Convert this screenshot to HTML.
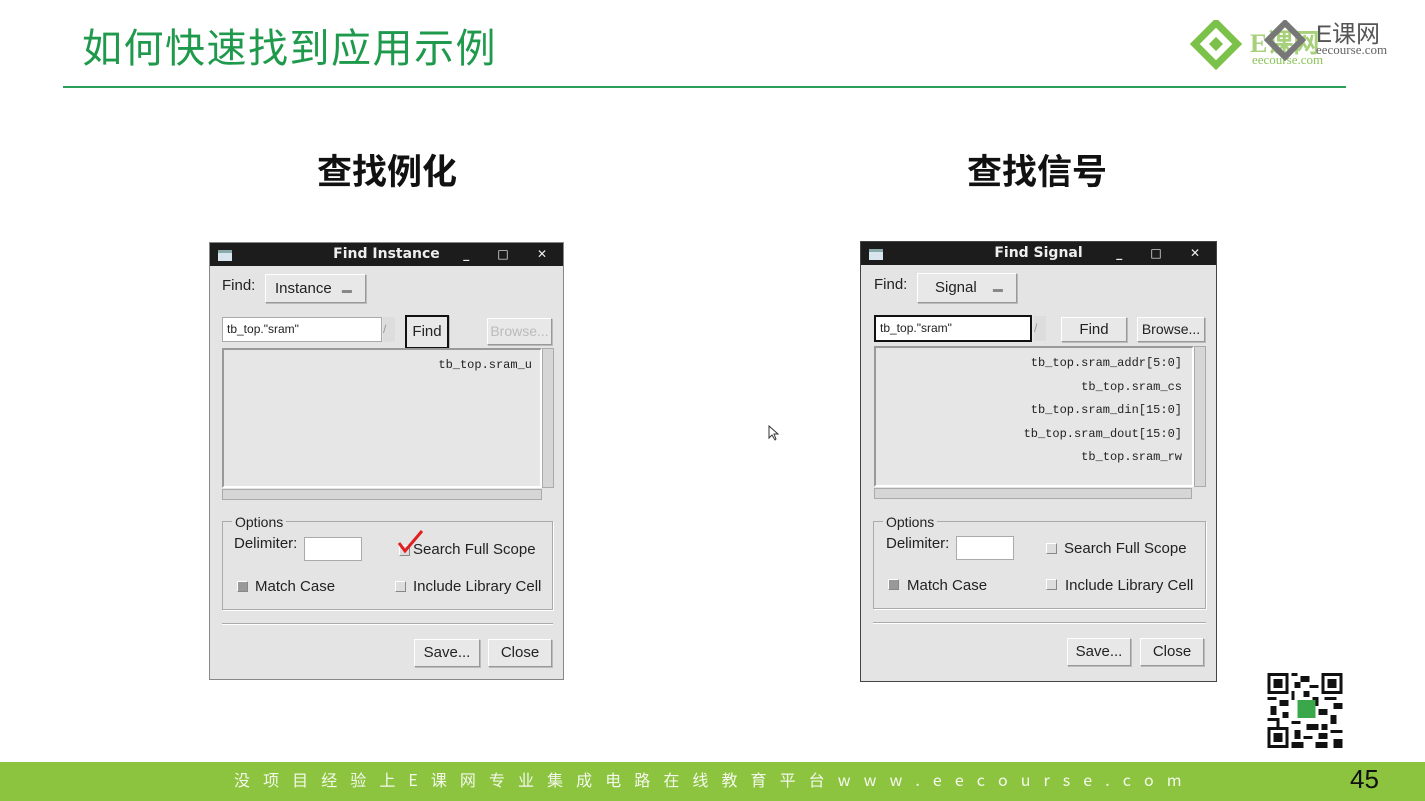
<!DOCTYPE html>
<html><head><meta charset="utf-8"><style>
*{box-sizing:border-box;margin:0;padding:0}
body{width:1425px;height:801px;background:#fff;position:relative;overflow:hidden;font-family:"Liberation Sans","Noto Sans CJK SC",sans-serif}
.a{position:absolute}
.title{left:82px;top:16px;font-size:40px;color:#1f9a4c;font-family:"Noto Sans CJK SC",sans-serif;letter-spacing:1.5px}
.hr{left:63px;top:86px;width:1283px;height:2px;background:#2aa058}
.h2{font-size:35px;font-weight:bold;color:#111;font-family:"Noto Sans CJK SC",sans-serif}
.dlg{background:#e4e4e4;border:1px solid #888;font-size:15px;color:#222}
.tb{left:0;top:0;right:0;height:23px;background:#1c1c1c;color:#eee;font-weight:bold;font-size:14px;text-align:center;line-height:23px;font-family:"DejaVu Sans",sans-serif}
.ic{left:8px;top:7px;width:14px;height:11px;background:#d8e4ee;border-top:3px solid #8aa}
.wc{right:4px;top:0;font-size:12px;letter-spacing:12px}
.btn{background:#e8e8e8;border:1px solid;border-color:#fff #999 #999 #fff;box-shadow:1px 1px 0 #bbb;text-align:center;font-size:15px}
.ent{background:#fff;border:1px solid #aaa;font-size:12px;padding-left:4px}
.list{background:#e6e6e6;border:2px solid;border-color:#999 #fff #fff #999;font-family:"Liberation Mono",monospace;font-size:12px;text-align:right;padding-right:8px}
.list div{height:23.5px;line-height:23.5px}
.grp{border:1px solid #aaa;box-shadow:1px 1px 0 #fff}
.cb{width:11px;height:11px;border:1px solid;border-color:#fff #888 #888 #fff;background:#ddd}
.sep{height:2px;border-top:1px solid #aaa;border-bottom:1px solid #fff}
.foot{left:0;top:762px;width:1425px;height:39px;background:#8cc43f}
.ft{left:234px;top:767px;width:948px;display:flex;justify-content:space-between;color:#f4f8ec;font-size:16px;font-family:"Noto Sans CJK SC",sans-serif}
</style></head><body>
<div class="a title">如何快速找到应用示例</div>
<div class="a hr"></div>
<svg class="a" style="left:1188px;top:20px" width="230" height="50" viewBox="0 0 230 50">
<g transform="translate(28,24) rotate(45)"><rect x="-15" y="-15" width="30" height="30" fill="none" stroke="#7cc24a" stroke-width="7"/><rect x="-5" y="-5" width="10" height="10" fill="#7cc24a"/></g>
<text x="62" y="32" font-size="26" fill="#a6d07a" font-family="Liberation Serif,serif" font-weight="bold">E课网</text>
<text x="64" y="44" font-size="13" fill="#8cc45a" font-family="Liberation Serif,serif">eecourse.com</text>
<g transform="translate(97,20) rotate(45)"><rect x="-12" y="-12" width="24" height="24" fill="none" stroke="#777" stroke-width="6"/></g>
<text x="128" y="22" font-size="24" fill="#555" font-family="Liberation Sans,Noto Sans CJK SC,sans-serif">E课网</text>
<text x="128" y="34" font-size="13" fill="#666" font-family="Liberation Serif,serif">eecourse.com</text>
</svg>
<div class="a h2" style="left:317px;top:144px">查找例化</div>
<div class="a h2" style="left:967px;top:144px">查找信号</div>

<div class="a dlg" style="left:209px;top:242px;width:355px;height:438px">
<div class="a tb">Find Instance<div class="a ic"></div><div class="a wc">_ □ ✕</div></div>
<div class="a" style="left:12px;top:34px">Find:</div>
<div class="a btn" style="left:55px;top:31px;width:101px;height:29px;line-height:27px;text-align:left;padding-left:9px">Instance <span style="font-size:10px;color:#888;margin-left:6px">▬</span></div>
<div class="a ent" style="left:12px;top:74px;width:160px;height:25px;line-height:23px">tb_top."sram"</div>
<div class="a" style="left:173px;top:74px;width:12px;height:25px;background:#ddd;color:#999;font-size:12px;line-height:25px">/</div>
<div class="a btn" style="left:195px;top:72px;width:44px;height:34px;border:2px solid #111;line-height:30px">Find</div>
<div class="a btn" style="left:277px;top:75px;width:65px;height:27px;line-height:25px;color:#bbb;font-size:14px">Browse...</div>
<div class="a list" style="left:12px;top:105px;width:320px;height:140px;padding-top:4px"><div>tb_top.sram_u</div></div>
<div class="a" style="left:332px;top:105px;width:12px;height:140px;background:#d6d6d6;border:1px solid #aaa"></div>
<div class="a" style="left:12px;top:246px;width:320px;height:11px;background:#d6d6d6;border:1px solid #aaa"></div>
<div class="a grp" style="left:12px;top:278px;width:331px;height:89px"></div>
<div class="a" style="left:22px;top:271px;background:#e4e4e4;padding:0 3px;font-size:14px">Options</div>
<div class="a" style="left:24px;top:292px;font-size:15px">Delimiter:</div>
<div class="a ent" style="left:94px;top:294px;width:58px;height:24px"></div>
<div class="a cb" style="left:189px;top:302px"></div>
<svg class="a" style="left:186px;top:284px" width="30" height="30"><path d="M3 16 L9 24 L26 4" fill="none" stroke="#e02020" stroke-width="3"/></svg>
<div class="a" style="left:203px;top:298px">Search Full Scope</div>
<div class="a cb" style="left:27px;top:338px;background:#999"></div>
<div class="a" style="left:45px;top:335px">Match Case</div>
<div class="a cb" style="left:185px;top:338px"></div>
<div class="a" style="left:203px;top:335px">Include Library Cell</div>
<div class="a sep" style="left:12px;top:380px;width:331px"></div>
<div class="a btn" style="left:204px;top:396px;width:66px;height:28px;line-height:26px">Save...</div>
<div class="a btn" style="left:278px;top:396px;width:64px;height:28px;line-height:26px">Close</div>
</div>

<div class="a dlg" style="left:860px;top:241px;width:357px;height:441px;border-color:#444">
<div class="a tb">Find Signal<div class="a ic"></div><div class="a wc">_ □ ✕</div></div>
<div class="a" style="left:13px;top:34px">Find:</div>
<div class="a btn" style="left:56px;top:31px;width:100px;height:30px;line-height:28px;text-align:left;padding-left:17px">Signal <span style="font-size:10px;color:#888;margin-left:12px">▬</span></div>
<div class="a ent" style="left:13px;top:73px;width:158px;height:27px;line-height:23px;border:2px solid #111">tb_top."sram"</div>
<div class="a" style="left:173px;top:74px;width:12px;height:25px;background:#ddd;color:#999;font-size:12px;line-height:25px">/</div>
<div class="a btn" style="left:200px;top:75px;width:66px;height:25px;line-height:23px">Find</div>
<div class="a btn" style="left:276px;top:75px;width:68px;height:25px;line-height:23px;font-size:14px">Browse...</div>
<div class="a list" style="left:13px;top:104px;width:320px;height:141px;padding-top:4px;padding-right:10px"><div>tb_top.sram_addr[5:0]</div><div>tb_top.sram_cs</div><div>tb_top.sram_din[15:0]</div><div>tb_top.sram_dout[15:0]</div><div>tb_top.sram_rw</div></div>
<div class="a" style="left:333px;top:104px;width:12px;height:141px;background:#d6d6d6;border:1px solid #aaa"></div>
<div class="a" style="left:13px;top:246px;width:318px;height:11px;background:#d6d6d6;border:1px solid #aaa"></div>
<div class="a grp" style="left:12px;top:279px;width:333px;height:88px"></div>
<div class="a" style="left:22px;top:272px;background:#e4e4e4;padding:0 3px;font-size:14px">Options</div>
<div class="a" style="left:25px;top:293px;font-size:15px">Delimiter:</div>
<div class="a ent" style="left:95px;top:294px;width:58px;height:24px"></div>
<div class="a cb" style="left:185px;top:301px"></div>
<div class="a" style="left:203px;top:298px">Search Full Scope</div>
<div class="a cb" style="left:27px;top:337px;background:#999"></div>
<div class="a" style="left:46px;top:335px">Match Case</div>
<div class="a cb" style="left:185px;top:337px"></div>
<div class="a" style="left:204px;top:335px">Include Library Cell</div>
<div class="a sep" style="left:12px;top:380px;width:333px"></div>
<div class="a btn" style="left:206px;top:396px;width:64px;height:28px;line-height:26px">Save...</div>
<div class="a btn" style="left:279px;top:396px;width:64px;height:28px;line-height:26px">Close</div>
</div>

<svg class="a" style="left:768px;top:425px" width="12" height="16"><path d="M1 1 L1 13 L4 10 L7 15 L8 14 L6 9 L10 9 Z" fill="#fff" stroke="#333" stroke-width="1"/></svg>

<svg class="a" style="left:1267px;top:673px" width="76" height="75" viewBox="0 0 25 25" shape-rendering="crispEdges">
<rect width="25" height="25" fill="#fff"/>
<g fill="#111"><path d="M0 0h7v7h-7zM18 0h7v7h-7zM0 18h7v7h-7z"/></g>
<g fill="#fff"><path d="M1 1h5v5h-5zM19 1h5v5h-5zM1 19h5v5h-5z"/></g>
<g fill="#111"><path d="M2 2h3v3h-3zM20 2h3v3h-3zM2 20h3v3h-3z"/>
<path d="M8 0h2v1h-2zM11 1h3v2h-3zM9 3h2v2h-2zM14 4h3v1h-3zM8 6h1v3h-1zM12 6h2v2h-2zM0 8h3v1h-3zM4 9h3v2h-3zM15 8h2v3h-2zM19 8h4v1h-4zM22 10h3v2h-3zM1 11h2v3h-2zM5 13h2v2h-2zM17 12h3v2h-3zM21 14h2v3h-2zM8 16h3v1h-3zM13 17h4v2h-4zM18 17h2v2h-2zM9 19h2v3h-2zM12 21h3v1h-3zM17 20h3v2h-3zM21 19h4v1h-4zM22 22h3v3h-3zM16 23h4v2h-4zM8 23h4v2h-4zM0 15h4v1h-4zM3 16h1v2h-1z"/></g>
<rect x="10" y="9" width="6" height="6" fill="#3aa84a"/>
</svg>

<div class="a foot"></div>
<div class="a ft"><span>没</span><span>项</span><span>目</span><span>经</span><span>验</span><span>上</span><span>E</span><span>课</span><span>网</span><span>专</span><span>业</span><span>集</span><span>成</span><span>电</span><span>路</span><span>在</span><span>线</span><span>教</span><span>育</span><span>平</span><span>台</span><span>w</span><span>w</span><span>w</span><span>.</span><span>e</span><span>e</span><span>c</span><span>o</span><span>u</span><span>r</span><span>s</span><span>e</span><span>.</span><span>c</span><span>o</span><span>m</span></div>
<div class="a" style="left:1350px;top:764px;font-size:26px;color:#111">45</div>
</body></html>
